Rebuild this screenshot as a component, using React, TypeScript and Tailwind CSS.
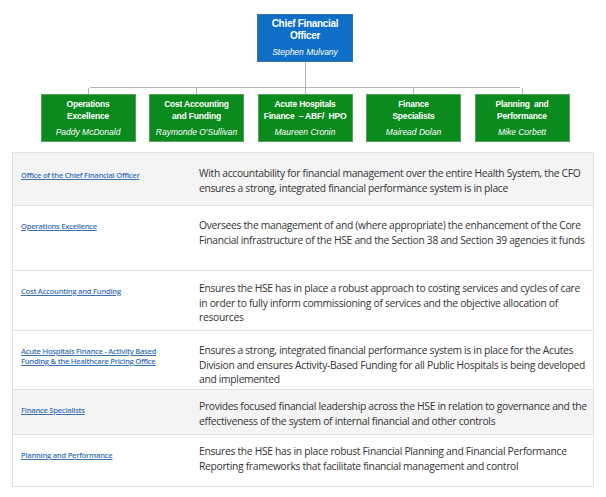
const managers = [
  { title: ['Operations', 'Excellence'], name: 'Paddy McDonald' },
  { title: ['Cost Accounting', 'and Funding'], name: "Raymonde O'Sullivan" },
  { title: ['Acute Hospitals', 'Finance  – ABF/  HPO'], name: 'Maureen Cronin' },
  { title: ['Finance', 'Specialists'], name: 'Mairead Dolan' },
  { title: ['Planning  and', 'Performance'], name: 'Mike Corbett' },
];

const rows = [
  { link: ['Office of the Chief Financial Officer'], text: 'With accountability for financial management over the entire Health System, the CFO ensures a strong, integrated financial performance system is in place', h: 'h-[52px]', grey: true, pt: 'pt-[13px]', lt: 'pt-[17px]' },
  { link: ['Operations Excellence'], text: 'Oversees the management of and (where appropriate) the enhancement of the Core Financial infrastructure of the HSE and the Section 38 and Section 39 agencies it funds', h: 'h-[65px]', grey: false, pt: 'pt-[12px]', lt: 'pt-[15px]' },
  { link: ['Cost Accounting and Funding'], text: 'Ensures the HSE has in place a robust approach to costing services and cycles of care in order to fully inform commissioning of services and the objective allocation of resources', h: 'h-[60px]', grey: false, pt: 'pt-[10px]', lt: 'pt-[15px]' },
  { link: ['Acute Hospitals Finance - Activity Based', 'Funding & the Healthcare Pricing Office'], text: 'Ensures a strong, integrated financial performance system is in place for the Acutes Division and ensures Activity-Based Funding for all Public Hospitals is being developed and implemented', h: 'h-[59px]', grey: false, pt: 'pt-[12px]', lt: 'pt-[15px]' },
  { link: ['Finance Specialists'], text: 'Provides focused financial leadership across the HSE in relation to governance and the effectiveness of the system of internal financial and other controls', h: 'h-[45px]', grey: true, pt: 'pt-[9px]', lt: 'pt-[15px]' },
  { link: ['Planning and Performance'], text: 'Ensures the HSE has in place robust Financial Planning and Financial Performance Reporting frameworks that facilitate financial management and control', h: 'h-[52px]', grey: false, pt: 'pt-[9px]', lt: 'pt-[15px]' },
];

export default function App() {
  return (
    <div className="w-[606px] h-[497px] bg-white" style={{ fontFamily: '"Open Sans", sans-serif' }}>
      <div className="pt-[14px] flex flex-col items-center" style={{ fontFamily: '"Liberation Sans", Arial, sans-serif' }}>
        <div className="w-[96px] h-[48px] bg-[#0f6fc6] border border-[#3c6ea8] text-white text-center flex flex-col justify-center ml-[4px]">
          <div className="text-[10px] font-bold leading-[12px] tracking-[-0.3px]">Chief Financial<br />Officer</div>
          <div className="text-[8.5px] italic mt-[4px]">Stephen Mulvany</div>
        </div>
        <div className="w-px h-[25px] bg-[#b5b5b5] ml-[4px]" />
        <div className="w-[430px] h-px bg-[#b5b5b5] ml-[4px]" />
        <div className="flex gap-[13.5px] ml-[4px]">
          {managers.map((m) => (
            <div key={m.name} className="flex flex-col items-center">
              <div className="w-px h-[6px] bg-[#b5b5b5]" />
              <div className="w-[95px] h-[48px] bg-[#0b8a1d] border border-[#5a9e5a] text-white text-center flex flex-col justify-center">
                <div className="text-[8.5px] font-bold leading-[12px] tracking-[-0.2px] whitespace-pre">{m.title[0]}<br />{m.title[1]}</div>
                <div className="text-[8.5px] italic mt-[4px]">{m.name}</div>
              </div>
            </div>
          ))}
        </div>
      </div>
      <div className="mx-[12px] mt-[10px] border border-[#e2e2e2]">
        {rows.map((r, i) => (
          <div key={i} className={`flex ${r.h} ${r.grey ? 'bg-[#f4f4f4]' : 'bg-white'} ${i > 0 ? 'border-t border-[#e2e2e2]' : ''}`}>
            <div className={`w-[186px] pl-[8px] ${r.lt}`}>
              {r.link.map((l) => (
                <div key={l} className="text-[7.6px] leading-[10px] font-semibold text-[#3b72b5] underline tracking-[-0.25px]">{l}</div>
              ))}
            </div>
            <div className={`flex-1 pr-[6px] ${r.pt} text-[10.3px] leading-[14.5px] text-[#333] tracking-[-0.3px]`}>{r.text}</div>
          </div>
        ))}
      </div>
    </div>
  );
}
